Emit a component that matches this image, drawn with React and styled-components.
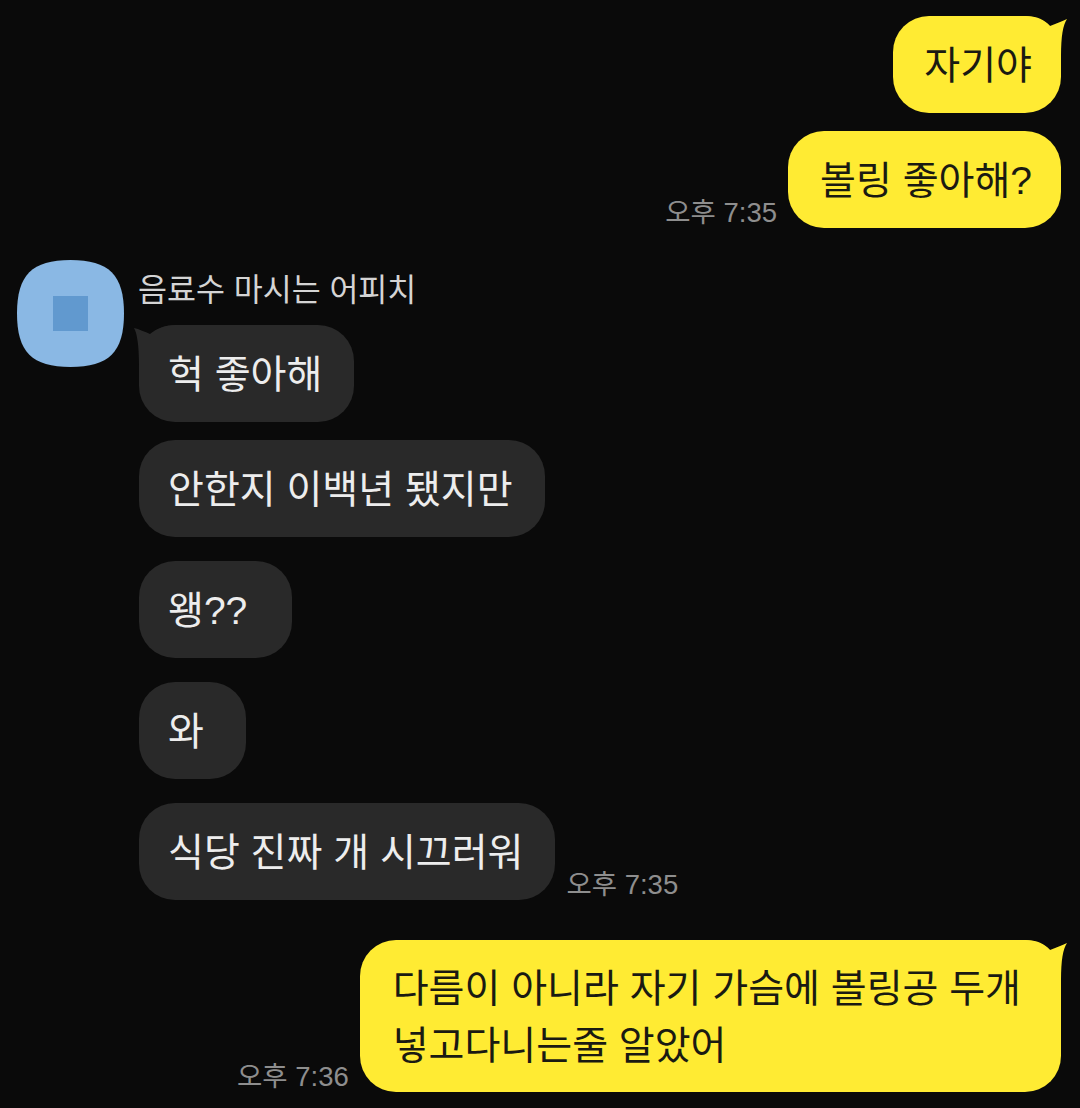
import React from "react";
import styled, { createGlobalStyle } from "styled-components";

const GlobalStyle = createGlobalStyle`
  html, body {
    margin: 0;
    padding: 0;
    background: #0a0a0a;
    font-family: "Liberation Sans", "Noto Sans CJK KR", sans-serif;
  }
`;

const OUT_COLOR = "#ffeb33";
const IN_COLOR = "#292929";

const OutTail = () => (
  <StyledOutTail width="42" height="40" viewBox="0 0 42 40">
    <path d="M0 0 C12 0 20 4 25 10 C31 8 37 5 42 3 C38 9 36 20 36 40 L0 40 Z" fill={OUT_COLOR} />
  </StyledOutTail>
);

const InTail = () => (
  <StyledInTail width="42" height="40" viewBox="0 0 42 40">
    <path d="M42 0 C30 0 22 4 16 9 C11 7 5 4 0 3 C3 8 5 20 5 40 L42 40 Z" fill={IN_COLOR} />
  </StyledInTail>
);

const Avatar = () => (
  <StyledAvatar width="107" height="107" viewBox="0 0 107 107">
    <path
      d="M53.5 0 C92 0 107 15 107 53.5 C107 92 92 107 53.5 107 C15 107 0 92 0 53.5 C0 15 15 0 53.5 0 Z"
      fill="#8ab8e4"
    />
    <rect x="36" y="36" width="35" height="35" fill="#6199cf" />
  </StyledAvatar>
);

const App = () => {
  return (
    <StyledPage>
      <GlobalStyle />
      <StyledOutGroup>
        <StyledRow>
          <StyledOutBubble>
            <OutTail />
            <StyledText>자기야</StyledText>
          </StyledOutBubble>
        </StyledRow>
        <StyledRow>
          <StyledTime>오후 7:35</StyledTime>
          <StyledOutBubble wide>
            <StyledText>볼링 좋아해?</StyledText>
          </StyledOutBubble>
        </StyledRow>
      </StyledOutGroup>

      <StyledInGroup>
        <Avatar />
        <StyledInColumn>
          <StyledName>음료수 마시는 어피치</StyledName>
          <StyledInBubble>
            <InTail />
            <StyledText>헉 좋아해</StyledText>
          </StyledInBubble>
          <StyledInBubble>
            <StyledText>안한지 이백년 됐지만</StyledText>
          </StyledInBubble>
          <StyledInBubble spaced trail={45}>
            <StyledText>왱??</StyledText>
          </StyledInBubble>
          <StyledInBubble spaced trail={42}>
            <StyledText>와</StyledText>
          </StyledInBubble>
          <StyledInRow>
            <StyledInBubble spaced>
              <StyledText>식당 진짜 개 시끄러워</StyledText>
            </StyledInBubble>
            <StyledTime>오후 7:35</StyledTime>
          </StyledInRow>
        </StyledInColumn>
      </StyledInGroup>

      <StyledLastRow>
        <StyledTime>오후 7:36</StyledTime>
        <StyledOutBubble multiline>
          <OutTail />
          <StyledText>
            다름이 아니라 자기 가슴에 볼링공 두개
            <br />
            넣고다니는줄 알았어
          </StyledText>
        </StyledOutBubble>
      </StyledLastRow>
    </StyledPage>
  );
};

export default App;

const StyledPage = styled.div`
  box-sizing: border-box;
  width: 1080px;
  height: 1108px;
  padding: 16px 19px 0 17px;
  overflow: hidden;
  background: #0a0a0a;
`;

const StyledOutGroup = styled.div`
  display: flex;
  flex-direction: column;
  gap: 18px;
`;

const StyledRow = styled.div`
  display: flex;
  justify-content: flex-end;
  align-items: flex-end;
  gap: 11px;
`;

const StyledLastRow = styled(StyledRow)`
  margin-top: 40px;
`;

const Bubble = styled.div`
  position: relative;
  border-radius: 36px;
  font-size: 39px;
  line-height: 57px;
  white-space: nowrap;
`;

// sits above the tail svg, which covers the bubble's corner
const StyledText = styled.span`
  position: relative;
`;

const StyledOutBubble = styled(Bubble)`
  padding: ${(props) =>
    props.multiline ? "20px 40px 18px 33px" : `21px 29px 19px ${props.wide ? 32 : 31}px`};
  background: ${OUT_COLOR};
  color: #1a1a12;
`;

const StyledInBubble = styled(Bubble)`
  align-self: flex-start;
  margin-top: ${(props) => (props.spaced ? "24px" : "18px")};
  padding: 21px ${(props) => props.trail || 32}px 19px 29px;
  background: ${IN_COLOR};
  color: #ededed;
`;

const StyledOutTail = styled.svg`
  position: absolute;
  top: 0;
  right: -6px;
`;

const StyledInTail = styled.svg`
  position: absolute;
  top: 0;
  left: -5px;
`;

const StyledTime = styled.div`
  font-size: 27.5px;
  line-height: 30px;
  color: #8e8e8e;
  white-space: nowrap;
`;

const StyledInGroup = styled.div`
  display: flex;
  align-items: flex-start;
  gap: 15px;
  margin-top: 32px;
`;

const StyledAvatar = styled.svg`
  flex: none;
`;

const StyledInColumn = styled.div`
  display: flex;
  flex-direction: column;
`;

const StyledName = styled.div`
  margin: 7px 0 -7px -1px;
  font-size: 31.5px;
  line-height: 47px;
  color: #d4d4d4;
  white-space: nowrap;
`;

const StyledInRow = styled.div`
  display: flex;
  align-items: flex-end;
  gap: 11px;
`;
